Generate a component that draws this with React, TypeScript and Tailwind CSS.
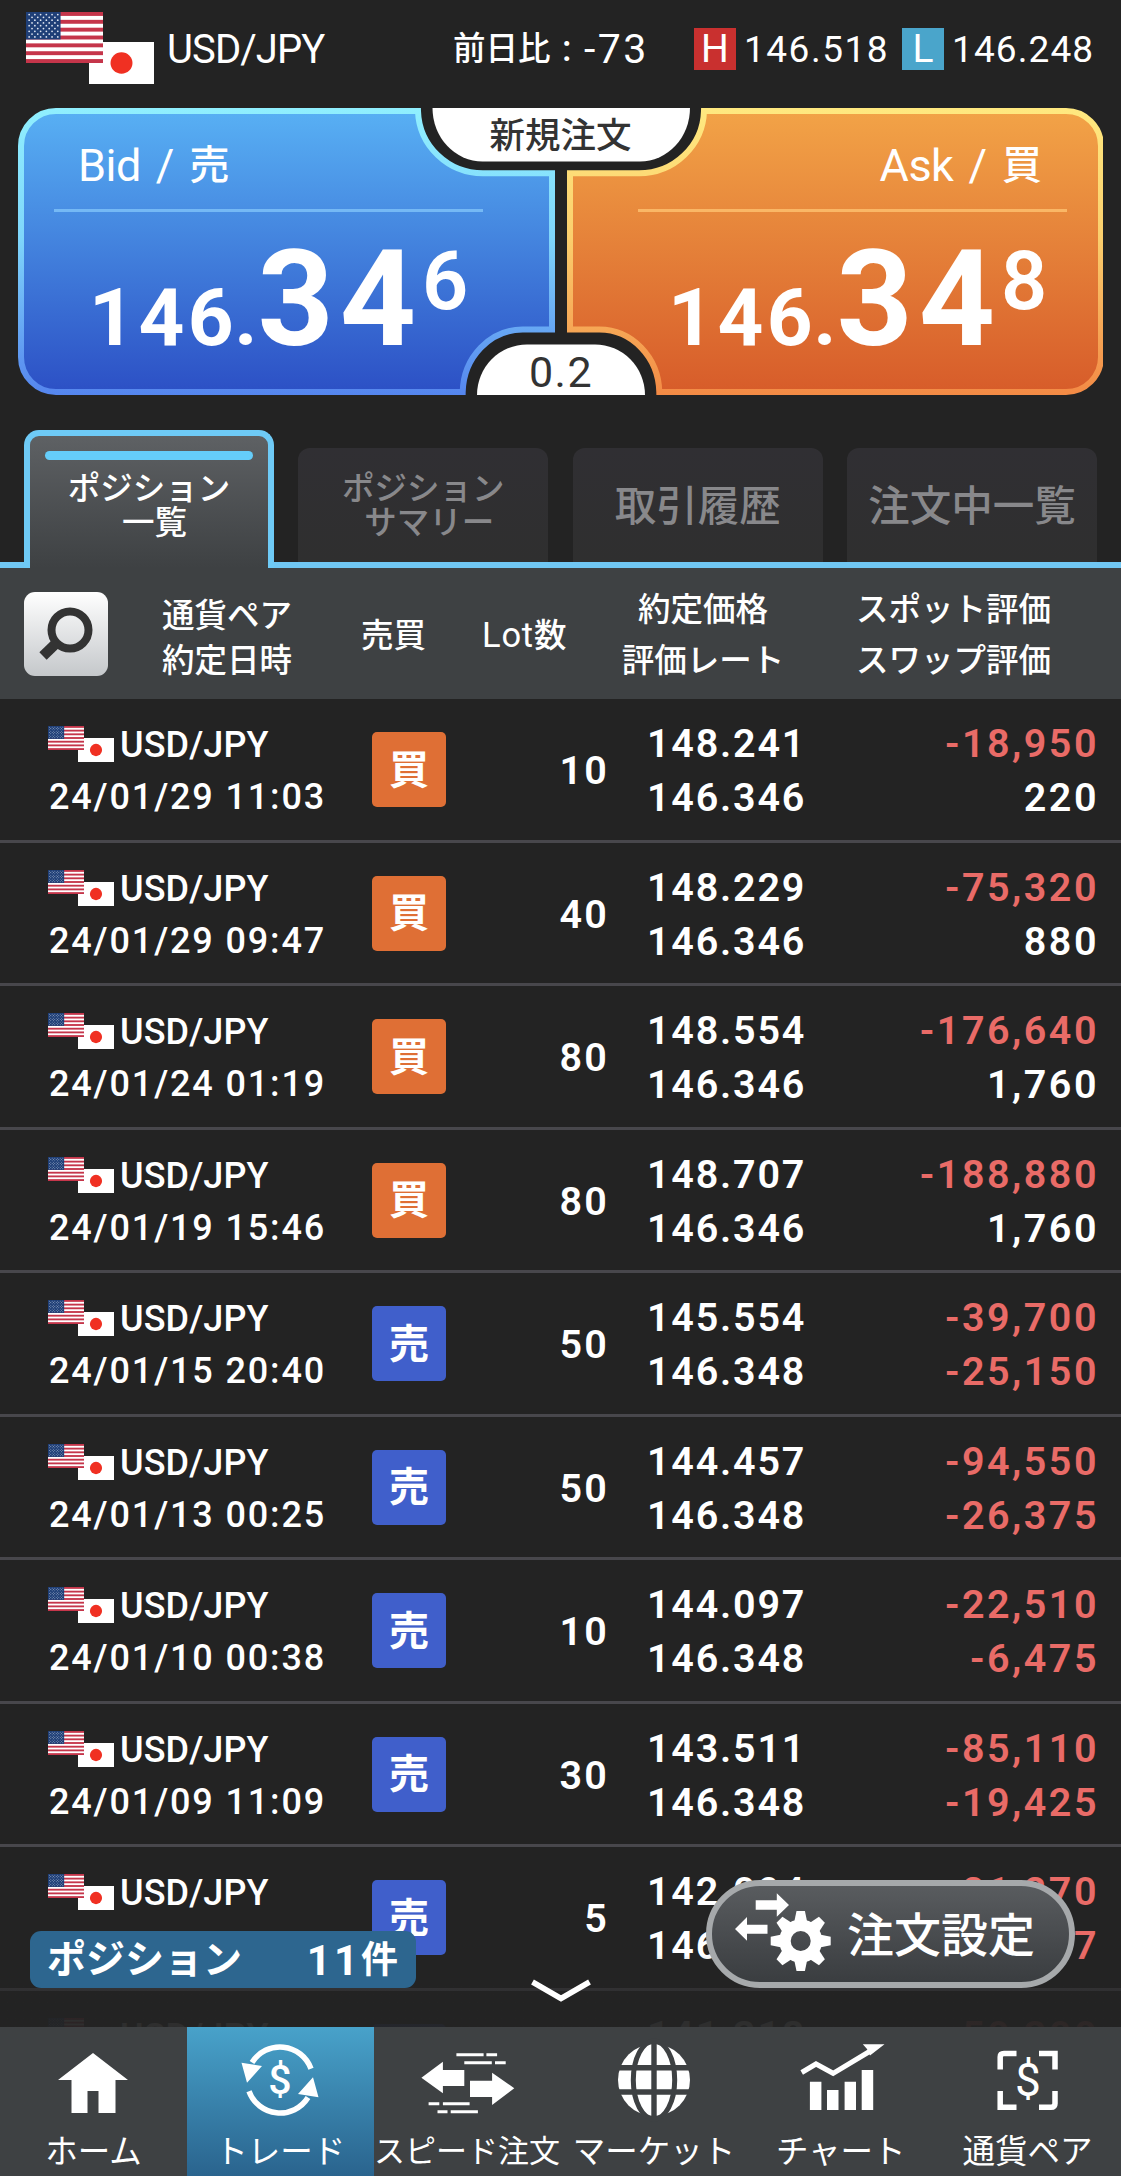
import React from "react";

const JP = "font-[Roboto,'Noto_Sans_CJK_JP',sans-serif]";

function FlagUS({ className }: { className: string }) {
  return (
    <svg className={className} viewBox="0 0 78 52" preserveAspectRatio="none">
      <rect width="78" height="52" fill="#fff" />
      {[0, 1, 2, 3, 4, 5, 6].map((i) => (
        <rect key={i} x="0" y={i * 8} width="78" height="4" fill="#c5354a" />
      ))}
      <rect width="35" height="28" fill="#1f3f77" />
      {[0, 1, 2, 3, 4, 5, 6, 7, 8].map((r) =>
        [0, 1, 2, 3, 4, 5].map((c) =>
          r % 2 === 1 && c === 5 ? null : (
            <circle key={`${r}-${c}`} cx={3.2 + c * 5.8 + (r % 2) * 2.9} cy={2.6 + r * 2.85} r="0.9" fill="#dfe6f2" />
          )
        )
      )}
    </svg>
  );
}

function FlagJP({ className }: { className: string }) {
  return (
    <svg className={className} viewBox="0 0 65 43" preserveAspectRatio="none">
      <rect width="65" height="43" fill="#fff" />
      <circle cx="32.5" cy="21.5" r="11" fill="#f03022" />
    </svg>
  );
}

type Row = { date: string; buy: boolean; lot: string; p1: string; p2: string; v1: string; v2: string };

const rows: Row[] = [
  { date: "24/01/29 11:03", buy: true, lot: "10", p1: "148.241", p2: "146.346", v1: "-18,950", v2: "220" },
  { date: "24/01/29 09:47", buy: true, lot: "40", p1: "148.229", p2: "146.346", v1: "-75,320", v2: "880" },
  { date: "24/01/24 01:19", buy: true, lot: "80", p1: "148.554", p2: "146.346", v1: "-176,640", v2: "1,760" },
  { date: "24/01/19 15:46", buy: true, lot: "80", p1: "148.707", p2: "146.346", v1: "-188,880", v2: "1,760" },
  { date: "24/01/15 20:40", buy: false, lot: "50", p1: "145.554", p2: "146.348", v1: "-39,700", v2: "-25,150" },
  { date: "24/01/13 00:25", buy: false, lot: "50", p1: "144.457", p2: "146.348", v1: "-94,550", v2: "-26,375" },
  { date: "24/01/10 00:38", buy: false, lot: "10", p1: "144.097", p2: "146.348", v1: "-22,510", v2: "-6,475" },
  { date: "24/01/09 11:09", buy: false, lot: "30", p1: "143.511", p2: "146.348", v1: "-85,110", v2: "-19,425" },
  { date: "24/01/05 22:31", buy: false, lot: "5", p1: "142.094", p2: "146.348", v1: "-21,270", v2: "-3,237" },
  { date: "24/01/03 20:15", buy: false, lot: "10", p1: "141.318", p2: "146.348", v1: "-50,300", v2: "-6,475" },
];

function PositionRow({ r }: { r: Row }) {
  const tone = (v: string) => (v.startsWith("-") ? "text-[#e96b67]" : "text-white");
  return (
    <div className="flex h-[143.5px] shrink-0 border-b-[3px] border-[#48474c] pl-[48px] pr-[22px] pt-[17px] font-semibold text-white">
      <div className="w-[324px]">
        <div className="flex h-[55px] items-start">
          <div className="mt-[10px] flex h-[36px] w-[66px] shrink-0">
            <FlagUS className="relative z-10 h-[24px] w-[36px] shrink-0" />
            <FlagJP className="-ml-[6px] mt-[12px] h-[24px] w-[36px] shrink-0" />
          </div>
          <span className="ml-[6px] pt-[2px] text-[36px] font-medium leading-[54px] tracking-[0.1px]">USD/JPY</span>
        </div>
        <div className="ml-[1px] whitespace-pre text-[36px] font-medium leading-[52px] tracking-[1.85px]">{r.date}</div>
      </div>
      <div
        className={`mt-[16px] flex h-[75px] w-[74px] items-center justify-center rounded-[5px] pt-[2px] text-[40px] font-bold leading-none ${
          r.buy ? "bg-[#df6f35]" : "bg-[#405fcb]"
        }`}
      >
        {r.buy ? "買" : "売"}
      </div>
      <div className="w-[163px] pt-[28px] text-right text-[39.5px] leading-[54px] tracking-[2.2px]">{r.lot}</div>
      <div className="ml-[38px] w-[170px] pt-[1px] text-[39.5px] leading-[54px] tracking-[1.8px]">
        <div>{r.p1}</div>
        <div>{r.p2}</div>
      </div>
      <div className="flex-1 pt-[1px] text-right text-[39.5px] leading-[54px] tracking-[2.5px]">
        <div className={tone(r.v1)}>{r.v1}</div>
        <div className={tone(r.v2)}>{r.v2}</div>
      </div>
    </div>
  );
}

function PanelShapes() {
  const shape =
    "M38 3 H400 A65 64.300 0 0 0 465 65.300 H534 V221.500 H505 A60 64 0 0 0 444.700 284 H38 A35 35 0 0 1 3 249 V38 A35 35 0 0 1 38 3 Z";
  return (
    <svg className="absolute inset-0 h-[287px] w-[1085px]" viewBox="0 0 1085 287">
      <defs>
        <linearGradient id="blueFill" x1="0" y1="0" x2="0" y2="1">
          <stop offset="0" stopColor="#58b0f4" />
          <stop offset="1" stopColor="#2c50c5" />
        </linearGradient>
        <linearGradient id="blueEdge" gradientUnits="userSpaceOnUse" x1="0" y1="0" x2="0" y2="287">
          <stop offset="0" stopColor="#90effe" />
          <stop offset="0.45" stopColor="#7fd6fb" />
          <stop offset="1" stopColor="#5585ee" />
        </linearGradient>
        <linearGradient id="orangeFill" x1="0" y1="0" x2="0" y2="1">
          <stop offset="0" stopColor="#f2a347" />
          <stop offset="1" stopColor="#d75c2a" />
        </linearGradient>
        <linearGradient id="orangeEdge" gradientUnits="userSpaceOnUse" x1="0" y1="0" x2="0" y2="287">
          <stop offset="0" stopColor="#ffe980" />
          <stop offset="0.45" stopColor="#fbcf6d" />
          <stop offset="1" stopColor="#f38a45" />
        </linearGradient>
      </defs>
      <path d={shape} fill="url(#blueFill)" stroke="url(#blueEdge)" strokeWidth="6" />
      <path d={shape} transform="translate(1086 0) scale(-1 1)" fill="url(#orangeFill)" stroke="url(#orangeEdge)" strokeWidth="6" />
      <path d="M414.500 0 H672 A50 53.500 0 0 1 622 53.500 H464.500 A50 53.500 0 0 1 414.500 0 Z" fill="#fff" />
      <path d="M459 287 A50 50.500 0 0 1 509 236.500 H577 A50 50.500 0 0 1 627 287 Z" fill="#fff" />
    </svg>
  );
}

function Price({ last }: { last: string }) {
  return (
    <div className="flex h-[110px] items-baseline text-white">
      <span className="text-[80px] font-bold leading-[110px] tracking-[3.5px]">146</span>
      <span className="-ml-[3px] text-[80px] font-bold leading-[110px]">.</span>
      <span className="text-[133px] font-bold leading-[110px] tracking-[6px]">34</span>
      <span className="relative -top-[36px] text-[81px] font-semibold leading-[110px]">{last}</span>
    </div>
  );
}

function Gear() {
  return (
    <g>
      {[0, 45, 90, 135, 180, 225, 270, 315].map((a) => (
        <path key={a} d="M-6.500 -19 L-4.200 -30 H4.200 L6.500 -19 Z" transform={`translate(70.700 53) rotate(${a})`} fill="#fff" />
      ))}
      <circle cx="70.7" cy="53" r="15.700" fill="none" stroke="#fff" strokeWidth="11.400" />
    </g>
  );
}

const icons: Record<string, React.ReactNode> = {
  home: <path d="M50 17 L85 44 H72.500 V77 H55.500 V55 H44.500 V77 H28.500 V44 H15 Z" fill="#fff" />,
  trade: (
    <g>
      <path d="M22 26.500 A33 33 0 0 1 81 32.700 M19 55.300 A33 33 0 0 0 78 61.500" fill="none" stroke="#fff" strokeWidth="5.500" />
      <path d="M11.500 26.700 L32 30 L17 46.700 Z M88.500 61.300 L68 58 L83 41.300 Z" fill="#fff" />
      <text x="50" y="58" textAnchor="middle" fontSize="41" fill="#fff" fontWeight="500">$</text>
    </g>
  ),
  speed: (
    <g fill="#fff">
      <path d="M4.400 41.700 L25.900 25.700 V34 H47.300 V50 H25.900 V57.300 Z" />
      <path d="M97.300 52.300 L75.100 36.700 V44.700 H53 V61 H75.100 V69 Z" />
      <path
        d="M39.400 18.700 H66.600 M69.400 18.700 H80.100 M47.300 26.700 H74.800 M78 26.700 H88.700 M11.600 67.700 H22.300 M25.900 67.700 H52.600 M20.500 75.700 H30.500 M33.700 75.700 H60.900"
        stroke="#fff"
        strokeWidth="3"
      />
    </g>
  ),
  market: (
    <g>
      <circle cx="50" cy="44" r="36" fill="#fff" />
      <path d="M50 6 V82 M12 31.700 H88 M12 56 H88" stroke="#3e4143" strokeWidth="5.400" />
      <ellipse cx="50" cy="44" rx="20.700" ry="39" fill="none" stroke="#3e4143" strokeWidth="5" />
    </g>
  ),
  chart: (
    <g fill="#fff">
      <path d="M18.900 45.700 H30.400 V74 H18.900 Z M36 54 H47.500 V74 H36 Z M53.600 45.700 H65 V74 H53.600 Z M70.700 34 H82.200 V74 H70.700 Z" />
      <path d="M10.700 36.500 L25 28 L42.100 37.300 L81 14" fill="none" stroke="#fff" strokeWidth="5" />
      <path d="M71.800 8.300 H93.500 L79 19.500 L76 13 Z" />
    </g>
  ),
  pair: (
    <g>
      <path
        d="M22.200 33.500 V21 Q22.200 17.400 26 17.400 H38.500 M61 17.400 H77 V33.500 M22.200 55 V71.300 H38.500 M61 71.300 H73 Q77 71.300 77 67.500 V55"
        fill="none"
        stroke="#fff"
        strokeWidth="5.500"
      />
      <text x="50" y="59.500" textAnchor="middle" fontSize="46" fill="#fff">$</text>
    </g>
  ),
};

const nav = [
  { id: "home", label: "ホーム", on: false },
  { id: "trade", label: "トレード", on: true },
  { id: "speed", label: "スピード注文", on: false },
  { id: "market", label: "マーケット", on: false },
  { id: "chart", label: "チャート", on: false },
  { id: "pair", label: "通貨ペア", on: false },
];

function Tab({ children, big }: { children: React.ReactNode; big?: boolean }) {
  return (
    <div
      className={`mt-[18px] flex h-[114px] w-[250px] items-center justify-center rounded-t-[12px] bg-gradient-to-b from-[#302f33] to-[#2f2f2f] text-center font-medium text-[#88888b] ${
        big ? "pt-[4px] text-[41.5px] leading-none" : "pt-[1px] text-[32.5px] leading-[34px]"
      }`}
    >
      <div>{children}</div>
    </div>
  );
}

export default function App() {
  return (
    <div className={`relative flex h-[2176px] w-[1121px] flex-col overflow-hidden bg-[#232323] text-white ${JP}`}>
      {/* quote header */}
      <header className="flex h-[108px] shrink-0 pl-[26px] pt-[12px]">
        <div className="flex w-[128px] shrink-0">
          <FlagUS className="relative z-10 h-[51px] w-[77px] shrink-0" />
          <FlagJP className="-ml-[14px] mt-[30px] h-[42px] w-[65px] shrink-0" />
        </div>
        <div className="flex h-[73px] flex-1 items-center whitespace-nowrap leading-none">
          <span className="ml-[13px] w-[286px] pt-[2px] text-[40px] tracking-[-0.9px]">USD/JPY</span>
          <span className="w-[100px] pt-[2px] text-[32.5px] font-medium">前日比</span>
          <span className="w-[31px] pl-[9px] text-[36px] font-medium">:</span>
          <span className="w-[110px] pt-[2px] text-[41px] tracking-[2.5px]">-73</span>
          <span className="flex size-[42px] items-center justify-center bg-[#c9302f] pt-[1px] text-[39px]">H</span>
          <span className="ml-[8px] w-[158px] pt-[2px] text-[37px] tracking-[1.5px]">146.518</span>
          <span className="flex size-[42px] items-center justify-center bg-[#4aa5cb] pt-[1px] text-[39px]">L</span>
          <span className="ml-[8px] pt-[2px] text-[37px] tracking-[1.1px]">146.248</span>
        </div>
      </header>

      {/* bid / ask */}
      <section className="relative mx-[18px] flex h-[287px] shrink-0">
        <PanelShapes />
        <div className="relative w-[542px]">
          <div className="ml-[60px] flex h-[101px] items-center gap-[15px] pt-[13px] text-[45px] leading-none">
            <span className="tracking-[-0.5px]">Bid</span>
            <span>/</span>
            <span className="pt-[2px] text-[40px] font-medium">売</span>
          </div>
          <div className="ml-[36px] h-[3px] w-[429px] bg-[#75b9f5]" />
          <div className="ml-[71px] mt-[33px]">
            <Price last="6" />
          </div>
        </div>
        <div className="relative w-[543px]">
          <div className="mr-[61px] flex h-[101px] items-center justify-end gap-[15px] pt-[13px] text-[45px] leading-none">
            <span className="tracking-[-0.5px]">Ask</span>
            <span>/</span>
            <span className="pt-[2px] text-[40px] font-medium">買</span>
          </div>
          <div className="ml-[78px] h-[3px] w-[429px] bg-[#fab766]" />
          <div className="ml-[108px] mt-[33px]">
            <Price last="8" />
          </div>
        </div>
        <div className="absolute left-[414px] top-0 flex h-[54px] w-[257px] items-center justify-center pt-[4px] text-[35.5px] font-medium leading-none text-[#333]">
          新規注文
        </div>
        <div className="absolute left-[459px] top-[237px] flex h-[50px] w-[168px] items-center justify-center pt-[5px] text-[43px] leading-none tracking-[1.5px] text-[#333]">
          0.2
        </div>
      </section>

      {/* tabs */}
      <nav className="mt-[35px] flex h-[138px] shrink-0 flex-col">
        <div className="relative flex h-[138px] justify-between border-b-[6px] border-[#70c7f3] pl-[24px] pr-[24px]">
          <div className="relative z-10 flex h-[138px] w-[250px] flex-col items-center rounded-t-[15px] border-x-[6px] border-t-[6px] border-[#6ecaf6] bg-gradient-to-b from-[#5e6164] to-[#3e4143] text-center text-[32.5px] font-medium leading-[34px]">
            <div className="mt-[15px] h-[9px] w-[208px] rounded-full bg-[#65cdfa]" />
            <div className="mt-[12px]">
              <div>ポジション</div>
              <div className="pl-[11px]">一覧</div>
            </div>
          </div>
          <Tab>
            <div>ポジション</div>
            <div className="pl-[12px]">サマリー</div>
          </Tab>
          <Tab big>取引履歴</Tab>
          <Tab big>注文中一覧</Tab>
        </div>
      </nav>

      {/* table header */}
      <div className="flex h-[131px] shrink-0 items-center whitespace-nowrap bg-[#3e4143] text-[32.5px] font-medium leading-[45px]">
        <div className="ml-[24px] size-[84px] shrink-0 rounded-[11px] bg-gradient-to-b from-white to-[#c5c8cb]">
          <svg className="size-[84px]" viewBox="0 0 84 84">
            <circle cx="46" cy="38" r="18.500" fill="none" stroke="#333" strokeWidth="8" />
            <path d="M33.500 50 L19 64" stroke="#333" strokeWidth="10.500" />
          </svg>
        </div>
        <div className="ml-[54px] w-[199px] pt-[10px]">
          通貨ペア
          <br />
          約定日時
        </div>
        <div className="w-[121px] pt-[5px]">売買</div>
        <div className="w-[120px] pt-[5px]">
          <span className="text-[34.5px] font-normal tracking-[0.8px]">Lot</span>数
        </div>
        <div className="w-[202px] pt-[4px] text-center leading-[51px]">
          約定価格
          <br />
          評価レート
        </div>
        <div className="ml-[52px] pt-[4px] leading-[51px]">
          スポット評価
          <br />
          スワップ評価
        </div>
      </div>

      {/* positions */}
      <main className="relative flex h-[1328px] shrink-0 flex-col overflow-hidden">
        {rows.map((r) => (
          <PositionRow key={r.date} r={r} />
        ))}
        <div className="absolute inset-x-0 bottom-0 z-20 h-[72px] bg-gradient-to-b from-transparent via-[#232323]/60 via-45% to-[#232323]/95 to-90%" />
      </main>

      {/* bottom navigation */}
      <footer className="grid h-[149px] shrink-0 grid-cols-6 bg-[#3e4143]">
        {nav.map((n) => (
          <div
            key={n.id}
            className={`flex flex-col items-center pt-[9px] ${n.on ? "bg-gradient-to-b from-[#48a2ca] to-[#2a648e]" : ""}`}
          >
            <svg className="h-[90px] w-[100px]" viewBox="0 0 100 90">
              {icons[n.id]}
            </svg>
            <div
              className={`whitespace-nowrap pt-[9px] leading-[34px] ${
                n.id === "speed" ? "text-[31px]" : "text-[32.5px]"
              }`}
            >
              {n.label}
            </div>
          </div>
        ))}
      </footer>

      {/* floating controls */}
      <div className="absolute left-[30px] top-[1931px] z-30 flex h-[57px] w-[386px] items-center justify-between rounded-[11px] bg-[#2d668f] pl-[17px] pr-[18px] pt-[2px] text-[39px] font-bold leading-none">
        <span>ポジション</span>
        <span className="flex items-center">
          <span className="text-[42px] tracking-[3px]">11</span>
          <span className="text-[37px]">件</span>
        </span>
      </div>
      <svg className="absolute left-[530px] top-[1977px] z-30 h-[28px] w-[62px]" viewBox="0 0 62 28">
        <path d="M2.500 5 L31 21.500 L59.500 5" fill="none" stroke="#fff" strokeWidth="5.500" />
      </svg>
      <div className="absolute left-[706px] top-[1880px] z-30 flex h-[108px] w-[369px] items-center rounded-full border-[6px] border-[#a6a9ab] bg-gradient-to-b from-[#595c5f] to-[#3a3d40] pl-[18px] text-[47px] font-medium leading-none">
        <svg className="h-[92px] w-[110px] shrink-0" viewBox="0 0 110 92">
          <path d="M25.700 12.300 H46.800 V5.300 L59 17 L46.800 28.700 V21.700 H25.700 Z" fill="#fff" />
          <path d="M5 41 L17 29 V36.700 H37.500 V45.700 H17 V52.700 Z" fill="#fff" />
          <Gear />
        </svg>
        <span className="ml-[7px] pt-[2px]">注文設定</span>
      </div>
    </div>
  );
}
